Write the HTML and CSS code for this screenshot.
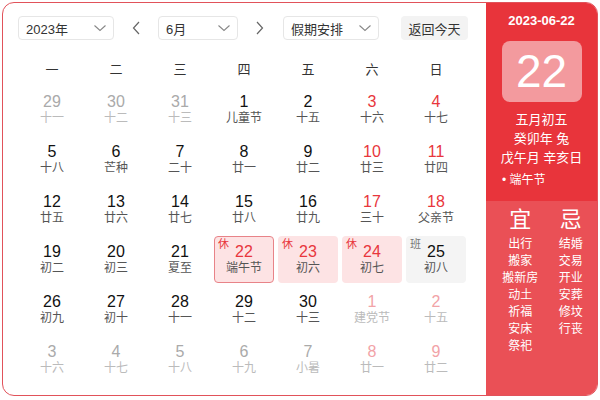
FILE: index.html
```html
<!DOCTYPE html>
<html lang="zh-CN">
<head>
    <meta charset="UTF-8">
    <meta name="viewport" content="width=device-width, initial-scale=1.0">
    <title>万年历</title>
    <link rel="stylesheet" href="styles.css">
</head>
<body>
    <div class="rili-container">
        <div class="rili-main">
            <div class="rili-toolbar">
                <div class="rili-select rili-select-year">
                    <span>2023年</span>
                    <svg class="rili-arrow" viewBox="0 0 14 14"><path d="M1.5 4.5l5.5 5 5.5-5" /></svg>
                </div>
                <span class="rili-nav">
                    <svg viewBox="0 0 12 16"><path d="M9 2L3.5 8 9 14" /></svg>
                </span>
                <div class="rili-select rili-select-month">
                    <span>6月</span>
                    <svg class="rili-arrow" viewBox="0 0 14 14"><path d="M1.5 4.5l5.5 5 5.5-5" /></svg>
                </div>
                <span class="rili-nav">
                    <svg viewBox="0 0 12 16"><path d="M3 2l5.5 6L3 14" /></svg>
                </span>
                <div class="rili-select rili-select-holiday">
                    <span>假期安排</span>
                    <svg class="rili-arrow" viewBox="0 0 14 14"><path d="M1.5 4.5l5.5 5 5.5-5" /></svg>
                </div>
                <button class="rili-today-btn">返回今天</button>
            </div>

            <div class="rili-week">
                <span>一</span><span>二</span><span>三</span><span>四</span><span>五</span><span>六</span><span>日</span>
            </div>

            <div class="rili-days" id="riliDays"></div>
        </div>

        <div class="rili-side">
            <div class="rili-side-top">
                <div class="rili-side-date">2023-06-22</div>
                <div class="rili-side-day">22</div>
                <div class="rili-side-lunar">
                    <p>五月初五</p>
                    <p>癸卯年 兔</p>
                    <p>戊午月 辛亥日</p>
                </div>
                <div class="rili-side-festival">• 端午节</div>
            </div>
            <div class="rili-side-bottom">
                <div class="rili-yiji">
                    <h4>宜</h4>
                    <span>出行</span><span>搬家</span><span>搬新房</span><span>动土</span><span>祈福</span><span>安床</span><span>祭祀</span>
                </div>
                <div class="rili-yiji">
                    <h4>忌</h4>
                    <span>结婚</span><span>交易</span><span>开业</span><span>安葬</span><span>修坟</span><span>行丧</span>
                </div>
            </div>
        </div>
    </div>

    <script>
        // 日期数据: [公历, 农历/节日, 类型]
        // 类型: o = 其他月份, w = 周末, h = 休, b = 班, t = 今天
        var dias = [
            ['29', '十一', 'o'], ['30', '十二', 'o'], ['31', '十三', 'o'], ['1', '儿童节', ''], ['2', '十五', ''], ['3', '十六', 'w'], ['4', '十七', 'w'],
            ['5', '十八', ''], ['6', '芒种', ''], ['7', '二十', ''], ['8', '廿一', ''], ['9', '廿二', ''], ['10', '廿三', 'w'], ['11', '廿四', 'w'],
            ['12', '廿五', ''], ['13', '廿六', ''], ['14', '廿七', ''], ['15', '廿八', ''], ['16', '廿九', ''], ['17', '三十', 'w'], ['18', '父亲节', 'w'],
            ['19', '初二', ''], ['20', '初三', ''], ['21', '夏至', ''], ['22', '端午节', 'h t'], ['23', '初六', 'h'], ['24', '初七', 'h'], ['25', '初八', 'b'],
            ['26', '初九', ''], ['27', '初十', ''], ['28', '十一', ''], ['29', '十二', ''], ['30', '十三', ''], ['1', '建党节', 'o ow'], ['2', '十五', 'o ow'],
            ['3', '十六', 'o'], ['4', '十七', 'o'], ['5', '十八', 'o'], ['6', '十九', 'o'], ['7', '小暑', 'o'], ['8', '廿一', 'o ow'], ['9', '廿二', 'o ow']
        ];

        var contenedor = document.getElementById('riliDays');
        dias.forEach(function (d) {
            var celda = document.createElement('div');
            var tipos = d[2].split(' ').filter(Boolean);
            celda.className = 'rili-cell' + tipos.map(function (t) { return ' is-' + t; }).join('');

            if (tipos.indexOf('h') > -1) {
                celda.innerHTML += '<i class="rili-tag">休</i>';
            } else if (tipos.indexOf('b') > -1) {
                celda.innerHTML += '<i class="rili-tag">班</i>';
            }
            celda.innerHTML += '<b class="rili-num">' + d[0] + '</b><small class="rili-lunar">' + d[1] + '</small>';
            contenedor.appendChild(celda);
        });
    </script>
</body>
</html>
```

FILE: styles.css
```css
body {
    margin: 0;
    font-family: 'Liberation Sans', 'Noto Sans CJK SC', sans-serif;
    background-color: #fff;
    color: #222;
}

.rili-container {
    box-sizing: border-box;
    width: 596px;
    height: 394px;
    margin: 2px;
    border: 1px solid #e1525a;
    border-radius: 12px;
    overflow: hidden;
    display: flex;
}

.rili-main {
    flex: 1;
    padding: 13px 0 0 15px;
}

.rili-toolbar {
    display: flex;
    align-items: center;
    height: 24px;
}

.rili-select {
    box-sizing: border-box;
    height: 24px;
    border: 1px solid #e6e6e6;
    border-radius: 4px;
    display: flex;
    align-items: center;
    justify-content: space-between;
    padding: 0 6px 0 7px;
    font-size: 13px;
    color: #333;
}

.rili-select-year {
    width: 96px;
}

.rili-select-month {
    width: 80px;
}

.rili-select-holiday {
    width: 96px;
    margin-left: 1px;
}

.rili-arrow {
    width: 14px;
    height: 14px;
    fill: none;
    stroke: #888;
    stroke-width: 1.1;
}

.rili-nav {
    width: 44px;
    display: flex;
    justify-content: center;
}

.rili-nav svg {
    width: 12px;
    height: 16px;
    fill: none;
    stroke: #666;
    stroke-width: 1.2;
}

.rili-today-btn {
    margin-left: 22px;
    height: 24px;
    width: 67px;
    border: none;
    border-radius: 4px;
    background-color: #f3f3f3;
    color: #333;
    font-family: inherit;
    font-size: 13px;
    padding: 0;
}

.rili-week {
    display: grid;
    grid-template-columns: repeat(7, 60px);
    column-gap: 4px;
    margin: 13px 0 3px 4px;
    height: 30px;
    align-items: center;
    text-align: center;
    font-size: 13px;
    color: #333;
}

.rili-days {
    display: grid;
    grid-template-columns: repeat(7, 60px);
    grid-auto-rows: 47px;
    gap: 3px 4px;
    margin-left: 4px;
}

.rili-cell {
    position: relative;
    box-sizing: border-box;
    border-radius: 4px;
    display: flex;
    flex-direction: column;
    align-items: center;
    justify-content: center;
    padding-bottom: 1px;
}

.rili-num {
    font-weight: normal;
    font-size: 16px;
    line-height: 17px;
    color: #111;
}

.rili-lunar {
    font-size: 12px;
    line-height: 16px;
    color: #555;
}

.rili-cell.is-o .rili-num {
    color: #aaa;
}

.rili-cell.is-o .rili-lunar {
    color: #bbb;
}

.rili-cell.is-w .rili-num {
    color: #e8363c;
}

.rili-cell.is-ow .rili-num {
    color: #f2a3a7;
}

.rili-cell.is-h {
    background-color: #fde3e4;
}

.rili-cell.is-h .rili-num {
    color: #e8363c;
}

.rili-cell.is-t {
    border: 1.5px solid #e88388;
}

.rili-cell.is-b {
    background-color: #f4f4f4;
}

.rili-tag {
    position: absolute;
    top: 2px;
    left: 4px;
    font-style: normal;
    font-size: 11px;
    line-height: 13px;
    color: #e8363c;
}

.rili-cell.is-t .rili-tag {
    top: 1px;
    left: 3px;
}

.rili-cell.is-b .rili-tag {
    color: #777;
}

.rili-side {
    width: 111px;
    display: flex;
    flex-direction: column;
    color: #fff;
}

.rili-side-top {
    height: 198px;
    background-color: #e8343b;
    display: flex;
    flex-direction: column;
    align-items: center;
}

.rili-side-date {
    margin-top: 10px;
    font-size: 13px;
    line-height: 15px;
    font-weight: bold;
}

.rili-side-day {
    margin-top: 13px;
    width: 80px;
    height: 61px;
    border-radius: 8px;
    background-color: #f39a9e;
    font-size: 46px;
    line-height: 61px;
    text-align: center;
}

.rili-side-lunar {
    margin-top: 8px;
    text-align: center;
    font-size: 13px;
    line-height: 19px;
}

.rili-side-lunar p {
    margin: 0;
}

.rili-side-festival {
    align-self: flex-start;
    margin: 6px 0 0 16px;
    font-size: 12px;
    line-height: 15px;
}

.rili-side-bottom {
    flex: 1;
    background-color: #ea5056;
    display: flex;
    justify-content: space-around;
    padding: 6px 4px 0 6px;
}

.rili-yiji {
    display: flex;
    flex-direction: column;
    align-items: center;
    font-size: 12px;
    line-height: 17px;
}

.rili-yiji h4 {
    margin: 0 0 3px;
    font-size: 22px;
    line-height: 26px;
    font-weight: normal;
}
```
